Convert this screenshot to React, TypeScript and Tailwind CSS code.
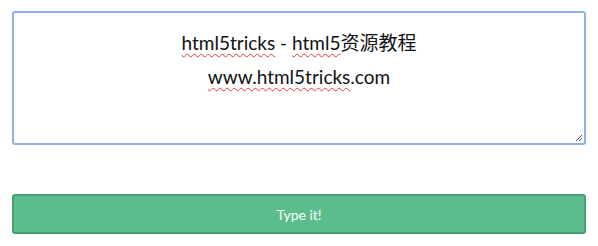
export default function App() {
  const wavy = "underline decoration-wavy decoration-[#e53935] decoration-1 underline-offset-[3px]"
  return (
    <div className="w-[598px] bg-white px-3 pt-[11px] font-['Lato','Noto_Sans_CJK_SC',sans-serif]">
      <div className="relative h-[134px] rounded-[3px] border-2 border-[#8eb0ee] bg-white px-4 pt-[13px] text-center text-[19px] leading-[34px] text-[#111]">
        <div>
          <span className={wavy}>html5tricks</span> - <span className={wavy}>html5</span>资源教程
        </div>
        <div>
          <span className={wavy}>www.html5tricks</span>.com
        </div>
        <svg className="absolute bottom-[1px] right-[1px]" width="8" height="8" viewBox="0 0 8 8">
          <path d="M7 1 L1 7 M7 4 L4 7" stroke="#555" strokeWidth="1" />
        </svg>
      </div>
      <button className="mt-[49px] flex h-[40px] w-full items-center justify-center rounded-[3px] border-2 border-[#4b9f74] bg-[#5bbd8b] text-[14px] text-white">
        Type it!
      </button>
    </div>
  )
}
